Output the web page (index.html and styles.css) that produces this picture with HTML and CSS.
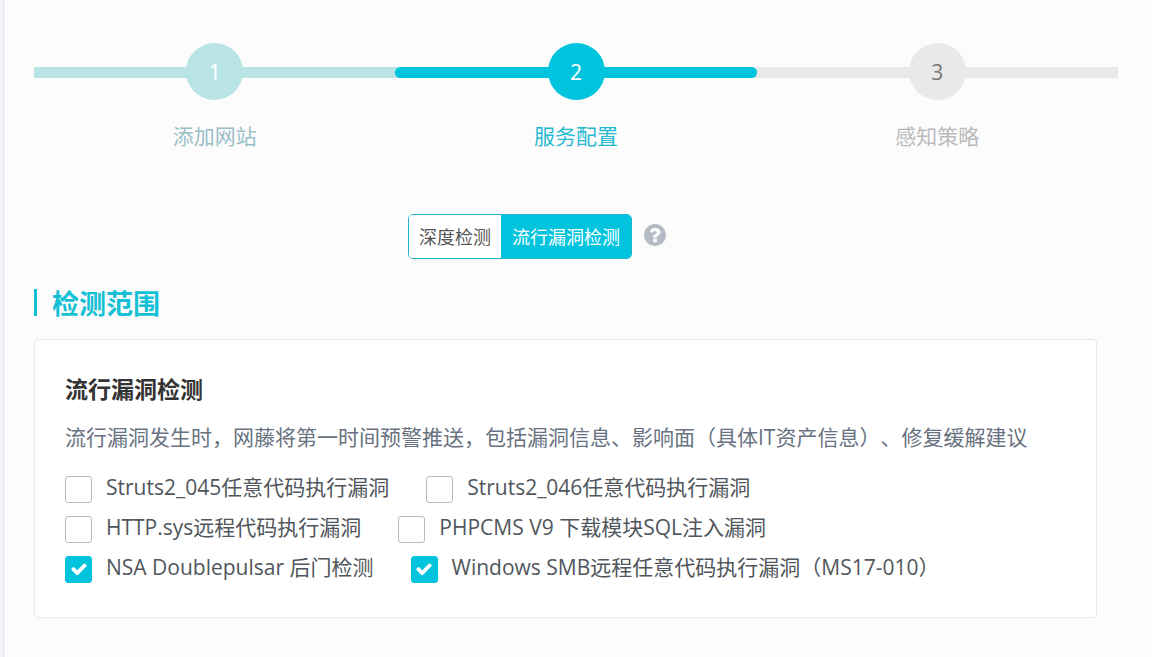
FILE: index.html
```html
<!DOCTYPE html>
<html lang="zh-CN">
<head>
<meta charset="utf-8">
<meta name="viewport" content="width=device-width, initial-scale=1">
<title>服务配置</title>
<link rel="stylesheet" href="styles.css">
</head>
<body>
<main class="panel">
  <ol class="steps">
    <li class="step step-done"><span class="step-track"><span class="step-number">1</span></span><span class="step-label">添加网站</span></li>
    <li class="step step-active" aria-current="step"><span class="step-track"><span class="step-number">2</span></span><span class="step-label">服务配置</span></li>
    <li class="step step-todo"><span class="step-track"><span class="step-number">3</span></span><span class="step-label">感知策略</span></li>
  </ol>

  <div class="mode">
    <div class="mode-group" role="group" aria-label="检测模式">
      <button class="mode-button" type="button" aria-pressed="false">深度检测</button>
      <button class="mode-button mode-selected" type="button" aria-pressed="true">流行漏洞检测</button>
    </div>
    <button class="help" type="button" aria-label="帮助">
      <svg class="help-icon" viewBox="128 128 1536 1536" aria-hidden="true"><path d="M1024 1376v-192q0-14-9-23t-23-9h-192q-14 0-23 9t-9 23v192q0 14 9 23t23 9h192q14 0 23-9t9-23zm256-672q0-88-55.5-163t-138.5-116-170-41q-243 0-371 213-15 24 8 42l132 100q7 6 19 6 16 0 25-12 53-68 86-92 34-24 86-24 48 0 85.5 26t37.5 59q0 38-20 61t-68 45q-63 28-115.5 86.5t-52.5 125.5v36q0 14 9 23t23 9h192q14 0 23-9t9-23q0-19 21.5-49.5t54.5-49.5q32-18 49-28.5t46-35 44.5-48 28-60.5 12.5-81zm384 192q0 209-103 385.5t-279.5 279.5-385.5 103-385.5-103-279.5-279.5-103-385.5 103-385.5 279.5-279.5 385.5-103 385.5 103 279.5 279.5 103 385.5z"/></svg>
    </button>
  </div>

  <h2 class="section-title">检测范围</h2>

  <section class="card">
    <h3 class="card-title">流行漏洞检测</h3>
    <p class="card-text">流行漏洞发生时，网藤将第一时间预警推送，包括漏洞信息、影响面（具体IT资产信息）、修复缓解建议</p>
    <div class="options">
      <div class="option-row">
        <label class="option"><span class="box"><input class="box-input" type="checkbox"><svg class="box-mark" viewBox="0 0 1792 1792" aria-hidden="true"><use href="#tick"/></svg></span><span>Struts2_045任意代码执行漏洞</span></label>
        <label class="option"><span class="box"><input class="box-input" type="checkbox"><svg class="box-mark" viewBox="0 0 1792 1792" aria-hidden="true"><use href="#tick"/></svg></span><span>Struts2_046任意代码执行漏洞</span></label>
      </div>
      <div class="option-row">
        <label class="option"><span class="box"><input class="box-input" type="checkbox"><svg class="box-mark" viewBox="0 0 1792 1792" aria-hidden="true"><use href="#tick"/></svg></span><span>HTTP.sys远程代码执行漏洞</span></label>
        <label class="option"><span class="box"><input class="box-input" type="checkbox"><svg class="box-mark" viewBox="0 0 1792 1792" aria-hidden="true"><use href="#tick"/></svg></span><span>PHPCMS V9 下载模块SQL注入漏洞</span></label>
      </div>
      <div class="option-row">
        <label class="option"><span class="box"><input class="box-input" type="checkbox" checked><svg class="box-mark" viewBox="0 0 1792 1792" aria-hidden="true"><path id="tick" d="M1671 566q0 40-28 68l-724 724-136 136q-28 28-68 28t-68-28l-136-136-362-362q-28-28-28-68t28-68l136-136q28-28 68-28t68 28l294 295 656-657q28-28 68-28t68 28l136 136q28 28 28 68z"/></svg></span><span>NSA Doublepulsar 后门检测</span></label>
        <label class="option"><span class="box"><input class="box-input" type="checkbox" checked><svg class="box-mark" viewBox="0 0 1792 1792" aria-hidden="true"><use href="#tick"/></svg></span><span>Windows SMB远程任意代码执行漏洞（MS17-010）</span></label>
      </div>
    </div>
  </section>
</main>
</body>
</html>
```
FILE: styles.css
```css
* {
  box-sizing: border-box;
}

body {
  margin: 0;
  background: #f3f3f9;
  font-family: "Open Sans", "Noto Sans CJK SC", sans-serif;
  font-size: 21px;
  line-height: 30px;
  color: #50565c;
  text-spacing-trim: space-all;
}

.panel {
  min-height: 100vh;
  margin-left: 3px;
  padding: 43px 34px 39px 30px;
  border-left: 1px solid #e4e4ea;
  background: #fcfcfc;
}

.steps {
  display: flex;
  margin: 0;
  padding: 0;
  list-style: none;
  background: linear-gradient(to right, #b9e4e6 50%, #e9e9e9 50%) 0 24px / 100% 11px no-repeat;
}

.step {
  flex: 1;
  display: flex;
  flex-direction: column;
  align-items: center;
  gap: 21px;
}

.step-track {
  display: flex;
  justify-content: center;
  align-self: stretch;
}

.step-number {
  display: flex;
  align-items: center;
  justify-content: center;
  width: 57px;
  height: 57px;
  border-radius: 50%;
}

.step-done .step-number {
  background: #b9e4e6;
  color: #fff;
}

.step-done .step-label {
  color: #9bbfc9;
}

.step-active .step-track::before,
.step-active .step-track::after {
  content: "";
  flex: 1;
  height: 11px;
  margin-top: 24px;
  background: #00c4dd;
}

.step-active .step-track::before {
  margin-right: -2px;
  border-radius: 6px 0 0 6px;
}

.step-active .step-track::after {
  margin-left: -2px;
  border-radius: 0 6px 6px 0;
}

.step-active .step-number {
  background: #00c4dd;
  color: #fff;
}

.step-active .step-label {
  color: #27b9d0;
}

.step-todo .step-number {
  background: #e9e9e9;
  color: #777;
}

.step-todo .step-label {
  color: #bbb;
}

.mode {
  display: flex;
  justify-content: center;
  gap: 12px;
  margin-top: 63px;
  padding-right: 78px;
}

.mode-group {
  display: flex;
  overflow: hidden;
  border: 1px solid #1fb5cc;
  border-radius: 5px;
}

.mode-button {
  height: 43px;
  padding: 0 10px;
  border: 0;
  background: #fff;
  color: #555;
  font: inherit;
  font-size: 18px;
}

.mode-selected {
  padding: 0 11px;
  background: #00c4dd;
  color: #fff;
}

.help {
  align-self: flex-start;
  margin-top: 10px;
  padding: 0;
  border: 0;
  background: none;
}

.help-icon {
  display: block;
  width: 22px;
  height: 22px;
  fill: #b4bbc5;
}

.section-title {
  display: flex;
  align-items: center;
  gap: 15px;
  margin: 25px 0 0;
  font-size: 27px;
  line-height: 40px;
  color: #13c0d6;
}

.section-title::before {
  content: "";
  width: 3px;
  height: 27px;
  margin-bottom: 3px;
  background: #13c0d6;
}

.card {
  margin: 15px 21px 0 0;
  padding: 34px 30px 29px;
  border: 1px solid #e8e8ec;
  border-radius: 4px;
  background: #fff;
}

.card-title {
  margin: 0;
  font-size: 23px;
  color: #333;
}

.card-text {
  margin: 18px 0 0;
  color: #687280;
}

.options {
  margin-top: 16px;
}

.option-row {
  display: flex;
  flex-wrap: wrap;
  column-gap: 37px;
}

.option {
  display: flex;
  gap: 14px;
  height: 40px;
  line-height: 38px;
}

.box {
  display: grid;
  place-items: center;
  width: 27px;
  height: 42px;
}

.box-input,
.box-mark {
  grid-area: 1 / 1;
}

.box-input {
  appearance: none;
  width: 27px;
  height: 27px;
  margin: 0;
  border: 1px solid #bbb;
  border-radius: 3px;
  background: #fff;
}

.box-input:checked {
  border-color: #00c4dd;
  background: #00c4dd;
}

.box-mark {
  width: 18px;
  height: 18px;
  fill: #fff;
  pointer-events: none;
}

.box-input:not(:checked) + .box-mark {
  visibility: hidden;
}
```
